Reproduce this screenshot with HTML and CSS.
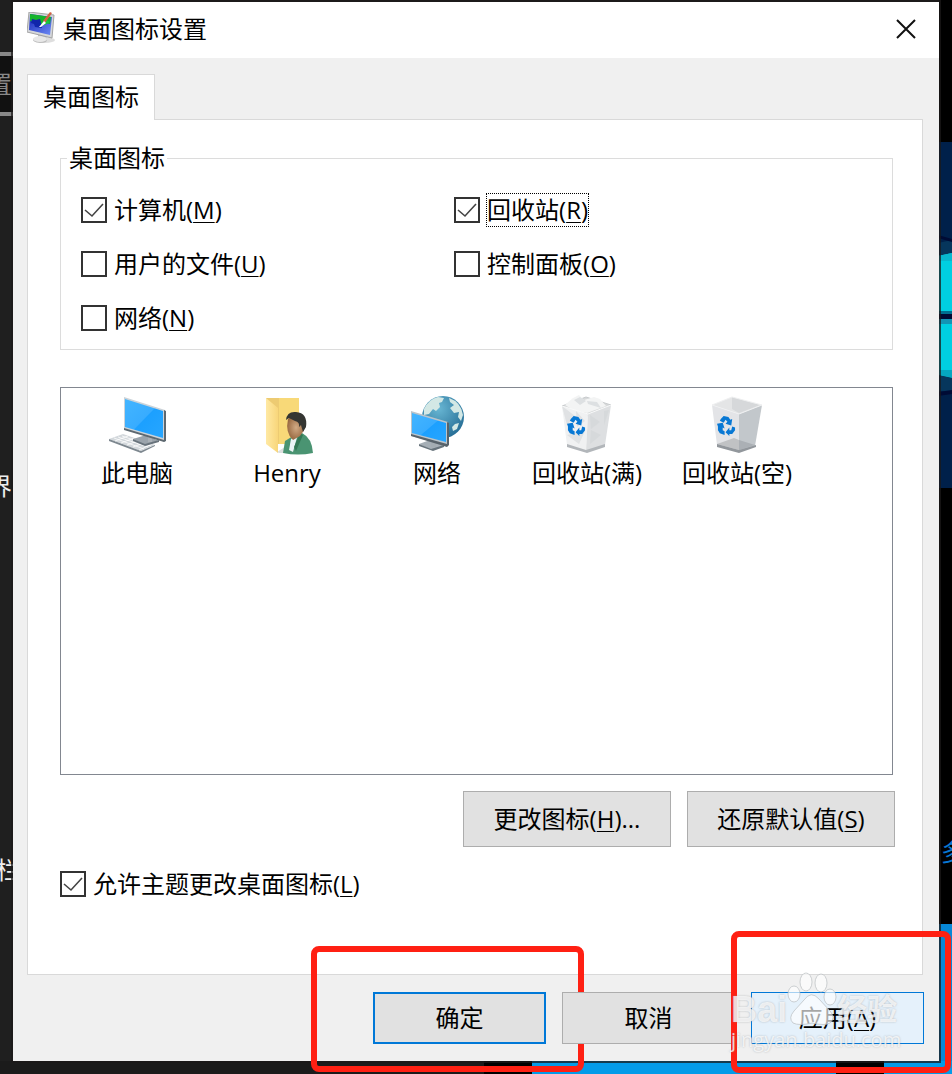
FILE: index.html
```html
<!DOCTYPE html>
<html lang="zh-CN">
<head>
  <meta charset="UTF-8">
  <meta name="viewport" content="width=device-width, initial-scale=1.0">
  <title>桌面图标设置</title>
  <link rel="stylesheet" href="styles.css">
</head>
<body>
  <!-- desktop behind the dialog -->
  <div class="desktop" aria-hidden="true">
    <div class="search-strip"><span>置</span></div>
    <span class="behind behind-top">界</span>
    <span class="behind behind-low">栏</span>
    <span class="behind behind-right">多</span>
    <div class="top-window"></div>
    <svg class="wallpaper" width="14" height="346" viewBox="0 0 14 346">
      <rect width="14" height="346" fill="#00204a"/>
      <path d="M0 101L14 98V114L0 116Z" fill="#06365c"/>
      <path d="M0 93L14 97V100L0 96Z" fill="#000b35"/>
      <path d="M0 114L14 111V169H0Z" fill="#00cfe2"/>
      <path d="M0 114L14 111V119H0Z" fill="#08b8cf"/>
      <rect y="169" width="14" height="3" fill="#006f91"/>
      <rect y="172" width="14" height="5" fill="#000b35"/>
      <rect y="177" width="14" height="5" fill="#1394b5"/>
      <path d="M0 182H14V236L0 233Z" fill="#00cfe2"/>
      <path d="M0 228H14V236L0 233Z" fill="#05a6c0"/>
      <path d="M0 233L14 236V250L0 249Z" fill="#06365c"/>
      <path d="M0 250L14 248V252L0 254Z" fill="#000b35"/>
    </svg>
    <div class="blue-window"></div>
    <div class="taskbar"><i class="dark"></i><i class="black"></i><i class="blue"></i><i class="black"></i><i class="blue end"></i></div>
  </div>

  <main class="dialog">
    <header class="titlebar">
      <svg class="app-icon" width="30" height="34" viewBox="0 0 30 34">
        <defs>
          <linearGradient id="screen" x1="0" y1="0" x2="1" y2="1">
            <stop offset="0" stop-color="#1525b8"/><stop offset="1" stop-color="#6f8cf5"/>
          </linearGradient>
        </defs>
        <ellipse cx="18" cy="28" rx="10" ry="3" fill="#dedede"/>
        <path d="M11 22L19 24L20 27Q21 31 13 31Q5 30 6 27L11 25Z" fill="#bdbdbd"/>
        <ellipse cx="13" cy="27" rx="7" ry="3" fill="#e8e8e8"/>
        <path d="M2 0L27 3L25 26L0 20Z" fill="#d5d7da" stroke="#a4a4a4"/>
        <path d="M3 2L25 5L23 23L2 18Z" fill="url(#screen)"/>
        <path d="M3 2L24 5L23 12L18 11L15 14L11 11L3 9Z" fill="#16b52c"/>
        <path d="M5 7L9 8L13 7L14 11L15 16L8 15L7 12L4 11Z" fill="#1025aa"/>
        <path d="M14 13L20 8L23 10L18 13Z" fill="#1cc641"/>
        <path d="M23 0L25 1L18 11L16 9Z" fill="#d26144"/>
        <path d="M17 9L19 11L14 15L12 15Z" fill="#fff"/>
      </svg>
      <h1>桌面图标设置</h1>
      <button class="close" aria-label="关闭">
        <svg width="20" height="20" viewBox="0 0 20 20"><path d="M1 1L19 19M19 1L1 19" stroke="#111" stroke-width="2" fill="none"/></svg>
      </button>
    </header>

    <div class="content">
      <div class="tabs" role="tablist"><button class="tab" role="tab" aria-selected="true">桌面图标</button></div>
      <section class="panel">
        <fieldset>
          <legend>桌面图标</legend>
          <div class="checks">
            <label class="check"><input type="checkbox" checked><span>计算机(<u>M</u>)</span></label>
            <label class="check"><input type="checkbox" checked><span class="focused">回收站(<u>R</u>)</span></label>
            <label class="check"><input type="checkbox"><span>用户的文件(<u>U</u>)</span></label>
            <label class="check"><input type="checkbox"><span>控制面板(<u>O</u>)</span></label>
            <label class="check"><input type="checkbox"><span>网络(<u>N</u>)</span></label>
          </div>
        </fieldset>

        <svg width="0" height="0" class="defs">
          <defs>
            <linearGradient id="blue" x1="0" y1="0" x2="1" y2="1">
              <stop offset="0" stop-color="#43b5ff"/><stop offset=".5" stop-color="#38acff"/><stop offset=".52" stop-color="#1ca0ff"/><stop offset="1" stop-color="#27a6ff"/>
            </linearGradient>
            <linearGradient id="folder"><stop offset="0" stop-color="#ffe9a4"/><stop offset="1" stop-color="#f8d67a"/></linearGradient>
            <radialGradient id="face"><stop offset="0" stop-color="#d1aa85"/><stop offset="1" stop-color="#9a6a42"/></radialGradient>
            <radialGradient id="globe" cx=".4" cy=".3" r=".75"><stop offset="0" stop-color="#68b6d3"/><stop offset="1" stop-color="#246c94"/></radialGradient>
            <symbol id="recycle" viewBox="0 0 20 21">
              <g fill="#0878d4">
                <path d="M4 3L7 0L12 1L14 4L16 3L15 10L9 8L11 6L9 4L7 7L3 5Z"/>
                <path d="M0 8L6 7L8 13L6 12L6 15L8 16V20L3 18L1 15L1 11Z"/>
                <path d="M9 17L13 12V15L15 15L16 11L19 12L19 15L16 19L13 19V21Z"/>
              </g>
            </symbol>
          </defs>
        </svg>
        <ul class="icon-list">
          <li>
            <svg width="64" height="64" viewBox="0 0 64 64">
              <path d="M4 46L18 41L50 52L36 58Z" fill="#d3d8dc"/>
              <path d="M4 46L36 58L50 52V53L36 60L4 48Z" fill="#7d878f"/>
              <path d="M9 45L39 56M13 44L43 54M17 43L46 53M10 48L23 43M16 50L29 45M22 52L35 47M28 54L41 49M34 57L47 51" stroke="#fff" stroke-opacity=".75" fill="none"/>
              <path d="M28 46L41 42L54 48L40 52Z" fill="#9ba4ac"/><path d="M28 46L40 51L54 47V49L40 53L28 48Z" fill="#68737c"/>
              <path d="M43 40L47 41V49H43Z" fill="#aab1b7"/>
              <path d="M19 4L60 17V49L19 36Z" fill="#cbd3d9"/>
              <path d="M59 17L61 18V48L59 49L19 37V35L59 47Z" fill="#5d6870"/>
              <path d="M20 6L58 18V45L20 34Z" fill="url(#blue)"/>
            </svg>
            <span>此电脑</span>
          </li>
          <li>
            <svg width="64" height="64" viewBox="0 0 64 64">
              <path d="M11 5H44V51H22Z" fill="#edcb72"/><path d="M24 5H44V51H24Z" fill="#f8d978"/>
              <path d="M11 5L23 15V60L11 51Z" fill="url(#folder)"/>
              <path d="M22 59L30 54V60H24Z" fill="#bbc0bd" opacity=".5"/>
              <path d="M28 60L30 48L38 43L47 40Q57 45 58 60Q43 63 28 60Z" fill="#4a9472"/>
              <path d="M36 46L43 41L38 59L34 57Z" fill="#eaf4f5"/><path d="M45 40L48 42L41 58L39 54Z" fill="#337855"/>
              <path d="M33 26Q41 18 49 26L50 34Q48 40 45 43L38 47Q30 40 33 26Z" fill="url(#face)"/>
              <path d="M31 27Q32 18 41 19Q53 20 51 34L48 39L46 32L44 34Q45 29 40 28L34 25Z" fill="#343532"/>
            </svg>
            <span>Henry</span>
          </li>
          <li>
            <svg width="64" height="64" viewBox="0 0 64 64">
              <circle cx="38" cy="24" r="21" fill="url(#globe)"/>
              <path d="M19 16Q24 6 33 4L39 5L37 9L34 10L35 14L31 18L28 16L24 21L19 22ZM44 5Q56 9 58 22L56 28L53 24L54 19L49 20L45 15L49 12L45 9ZM50 31L54 30L52 36L48 38L47 34Z" fill="#d3e8e5"/>
              <path d="M14 51L25 47L39 53L26 57Z" fill="#a6afb6"/><path d="M14 51L26 56L39 52V54L28 58L14 53Z" fill="#68747c"/>
              <path d="M26 47H31V54H26Z" fill="#a4adb3"/>
              <path d="M6 18L43 29V53L6 43Z" fill="#bac4cb"/><path d="M42 29L44 30V52L42 54L6 43V41L42 51Z" fill="#58636b"/>
              <path d="M7 20L41 30V49L7 40Z" fill="url(#blue)"/>
            </svg>
            <span>网络</span>
          </li>
          <li>
            <svg width="64" height="64" viewBox="0 0 64 64">
              <path d="M7 13L31 4L56 12L32 23Z" fill="#d7d9da" stroke="#c8cbcd"/>
              <path d="M10 12L18 5L24 2L29 7L39 4L45 6L51 13L40 17L32 20L18 17Z" fill="#f3f4f4"/>
              <path d="M19 7L25 12L31 8L25 4ZM32 8L42 9L46 15L33 11Z" fill="#dde0e2"/>
              <path d="M7 13L33 21L31 58L12 52Z" fill="#f0f1f2"/><path d="M33 21L56 12L50 52L31 58Z" fill="#dddfe1"/>
              <path d="M7 13L20 23L12 32ZM21 18L30 28L22 34ZM12 42L30 38L24 51ZM35 22L45 29L36 36ZM49 18L54 17L49 32ZM36 37L46 42L35 51Z" fill="#cfd3d6" opacity=".5"/>
              <path d="M12 51L31 57L50 51V54L32 60L12 54Z" fill="#b2b6ba"/>
              <path d="M7 13L33 21L56 12" stroke="#f9fafa" fill="none"/>
              <use href="#recycle" x="12" y="22" width="19" height="22"/>
            </svg>
            <span>回收站(满)</span>
          </li>
          <li>
            <svg width="64" height="64" viewBox="0 0 64 64">
              <path d="M7 12L27 4L57 12L34 21Z" fill="#e4e5e6"/>
              <path d="M27 4L55 12L34 20L27 16Z" fill="#d6d8da"/>
              <path d="M7 12L34 21V58L12 52Z" fill="#e3e4e7"/><path d="M34 21L57 12L50 53L34 58Z" fill="#c2c7cb"/>
              <path d="M12 51L29 45L34 47V57Z" fill="#c0c2c4"/><path d="M34 47L50 52L34 57Z" fill="#abb0b5"/>
              <path d="M12 51L34 57L51 52V54L34 60L12 54Z" fill="#92979c"/>
              <path d="M7 12L27 4L57 12L34 21Z" stroke="#eff0f1" fill="none"/>
              <use href="#recycle" x="12" y="22" width="19" height="22"/>
            </svg>
            <span>回收站(空)</span>
          </li>
        </ul>

        <div class="icon-actions">
          <button class="btn wide">更改图标(<u>H</u>)...</button>
          <button class="btn wide">还原默认值(<u>S</u>)</button>
        </div>
        <label class="check theme-check"><input type="checkbox" checked><span>允许主题更改桌面图标(<u>L</u>)</span></label>
      </section>

      <footer class="footer">
        <div class="action ok-action"><button class="btn ok">确定</button></div>
        <div class="action"><button class="btn">取消</button></div>
        <div class="action apply-action">
          <button class="btn apply">应用(<u>A</u>)</button>
          <div class="watermark" aria-hidden="true">
            <span class="wm-bai">Bai</span>
            <svg class="paw" width="50" height="54" viewBox="0 0 50 54">
              <g fill="#fff" fill-opacity=".65" stroke="#b9bdc0" stroke-opacity=".7">
                <ellipse cx="19" cy="10" rx="6" ry="9"/><ellipse cx="34" cy="11" rx="6" ry="9"/>
                <ellipse cx="7" cy="22" rx="6" ry="8"/><ellipse cx="43" cy="25" rx="6" ry="8"/>
                <path d="M17 28Q24 18 32 27L43 39Q49 46 43 51Q38 54 25 51Q12 54 6 51Q1 46 7 39Z"/>
              </g>
            </svg>
            <span class="wm-exp">经验</span>
            <span class="wm-url">jingyan.baidu.com</span>
          </div>
        </div>
      </footer>
    </div>
  </main>
</body>
</html>
```
FILE: styles.css
```css
* {
  box-sizing: border-box;
}

body {
  margin: 0;
  min-height: 100vh;
  padding: 2px 13px 13px;
  background: #1f1f1f;
  font-family: "Open Sans", "Noto Sans CJK SC", sans-serif;
  font-size: 24px;
  line-height: 32px;
  color: #000;
  display: flex;
  overflow: hidden;
}

button {
  font: inherit;
  color: inherit;
}

u {
  text-decoration-thickness: 1px;
  text-underline-offset: 3px;
}

/* desktop */
.desktop {
  position: absolute;
  inset: 0;
  overflow: hidden;
}

.search-strip {
  position: absolute;
  top: 52px;
  left: 0;
  width: 13px;
  height: 64px;
  background: #111;
  border-top: 4px solid #888;
  border-bottom: 4px solid #888;
  color: #888;
}

.search-strip span {
  position: absolute;
  top: 12px;
  left: -12px;
}

.behind {
  position: absolute;
  color: #eee;
}

.behind-top {
  top: 470px;
  left: -12px;
}

.behind-low {
  top: 854px;
  left: -4px;
}

.behind-right {
  top: 836px;
  right: -13px;
  color: #0878d4;
  z-index: 1;
}

.top-window {
  position: absolute;
  top: 0;
  right: 0;
  width: 13px;
  height: 100%;
  background: #000;
}

.wallpaper {
  position: absolute;
  top: 142px;
  right: 0;
}

.blue-window {
  position: absolute;
  bottom: 0;
  right: 0;
  width: 13px;
  height: 150px;
  background: #0788d8;
}

.taskbar {
  position: absolute;
  bottom: 0;
  left: 0;
  width: 100%;
  height: 13px;
  display: flex;
}

.dark {
  width: 484px;
  background: #1b1b1b;
}

.black {
  width: 48px;
  background: #000;
}

.blue {
  width: 304px;
  background: #049be8;
}

.end {
  flex: 1;
}

/* dialog */
.dialog {
  position: relative;
  flex: 1;
  display: flex;
  flex-direction: column;
  background: #f0f0f0;
  box-shadow: 0 0 0 2px rgba(28, 26, 26, 0.75);
}

.titlebar {
  height: 56px;
  padding: 0 23px 2px 14px;
  display: flex;
  align-items: center;
  gap: 6px;
  background: #fff;
}

.titlebar h1 {
  flex: 1;
  margin: 0;
  font-size: 24px;
  font-weight: 400;
}

.close {
  display: flex;
  padding: 0;
  border: none;
  background: none;
}

.content {
  flex: 1;
  display: flex;
  flex-direction: column;
  padding: 16px 16px 17px 14px;
}

.tabs {
  display: flex;
}

.tab {
  position: relative;
  height: 46px;
  margin-bottom: -1px;
  padding: 0 15px 2px;
  border: 1px solid #d9d9d9;
  border-bottom: none;
  background: #fff;
}

.panel {
  flex: 1;
  display: flex;
  flex-direction: column;
  padding: 22px 29px 73px 32px;
  border: 1px solid #d9d9d9;
  background: #fff;
}

fieldset {
  margin: 0;
  padding: 19px 0 14px 20px;
  border: 1px solid #dcdcdc;
}

legend {
  margin-left: -14px;
  padding: 0 2px;
}

.checks {
  display: grid;
  grid-template-columns: 46% 1fr;
  row-gap: 20px;
}

.check {
  display: flex;
  align-items: center;
  gap: 6px;
  height: 34px;
}

.check input {
  appearance: none;
  width: 26px;
  height: 26px;
  margin: 0;
  border: 2px solid #333;
  background: #fff;
}

.check input:checked {
  background: url("data:image/svg+xml,%3Csvg xmlns='http://www.w3.org/2000/svg' viewBox='0 0 22 22'%3E%3Cpath d='M2 11l7 6L20 5' fill='none' stroke='%23444' stroke-width='1.6'/%3E%3C/svg%3E");
}

.check span {
  border: 1px solid transparent;
}

.check .focused {
  border: 1px dotted #000;
}

.defs {
  position: absolute;
}

.icon-list {
  flex: 1;
  display: flex;
  align-items: flex-start;
  margin: 37px 0 16px;
  padding: 5px 1px;
  border: 1px solid #828790;
  list-style: none;
}

.icon-list li {
  width: 150px;
  display: flex;
  flex-direction: column;
  align-items: center;
}

.icon-actions {
  display: flex;
  justify-content: flex-end;
  gap: 16px;
  margin-right: -2px;
}

.btn {
  width: 173px;
  height: 52px;
  padding: 0;
  border: 1px solid #adadad;
  background: #e1e1e1;
}

.wide {
  width: 208px;
  height: 56px;
}

.theme-check {
  margin-top: 20px;
}

.footer {
  display: flex;
  justify-content: flex-end;
  gap: 16px;
  margin-right: -1px;
  padding-top: 17px;
}

.action {
  position: relative;
  display: flex;
}

.ok {
  border: 2px solid #0078d7;
}

.apply {
  border-color: #0078d7;
  background: #e5f1fb;
}

/* red marker frames around the buttons */
.ok-action::after,
.apply-action::after {
  content: "";
  position: absolute;
  inset: -46px -38px -28px -62px;
  border: 6px solid #ff2013;
  border-radius: 8px;
}

.apply-action::after {
  inset: -61px -27px -29px -20px;
}

/* watermark */
.watermark {
  position: absolute;
  z-index: 1;
  left: -20px;
  bottom: -10px;
  display: grid;
  grid-template-columns: 56px 50px 60px;
  align-items: end;
  font-family: "Liberation Sans", "Noto Sans CJK SC", sans-serif;
  font-weight: 700;
  color: rgba(255, 255, 255, 0.75);
  text-shadow: 0 0 2px rgba(140, 145, 150, 0.6);
  pointer-events: none;
}

.wm-bai {
  font-size: 36px;
}

.wm-exp {
  font-size: 30px;
}

.wm-url {
  grid-column: 1 / 4;
  font-family: "Open Sans", sans-serif;
  font-size: 20px;
  font-weight: 400;
  line-height: 28px;
}
```
